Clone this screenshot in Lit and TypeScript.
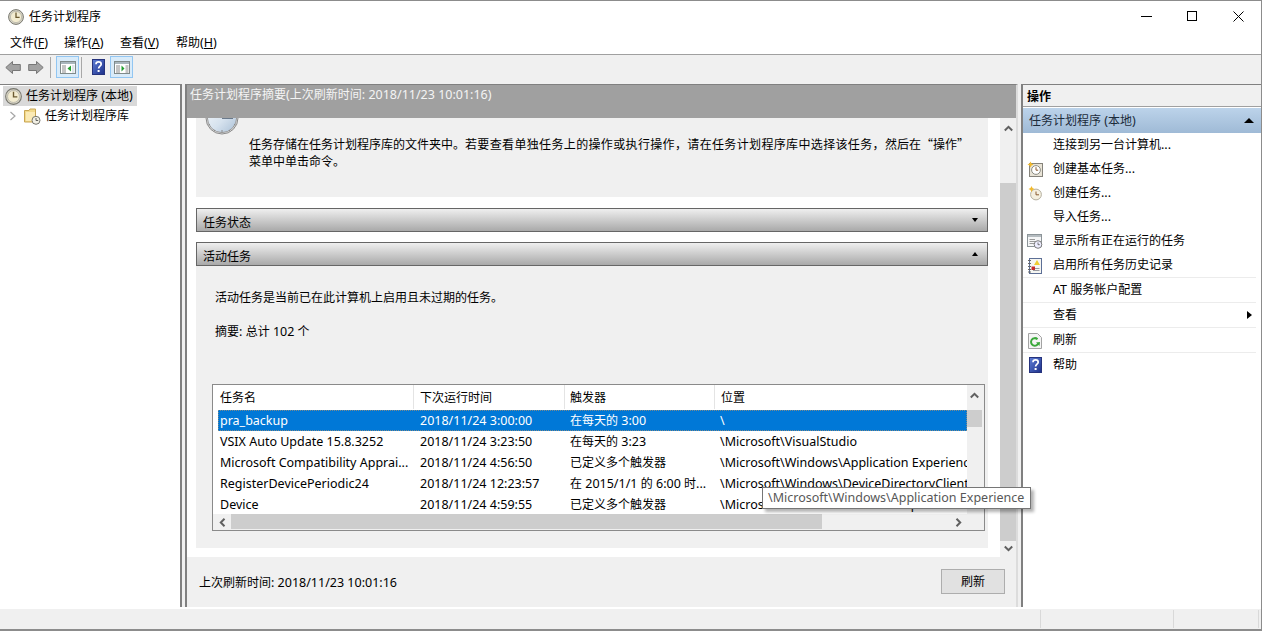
import { LitElement, html, css, svg } from "lit";
import { customElement } from "lit/decorators.js";

/* Latin runs are set slightly larger than CJK runs, as in the reference's UI font. */
const t = (s: string) =>
  s.split(/([\x00-\x7f]+)/).filter(Boolean).map((p) =>
    /^[\x00-\x7f]/.test(p) ? html`<span class="l">${p}</span>` : p);

const clock = (s: number) => html`<svg width=${s} height=${s} viewBox="0 0 16 16"><circle cx="8" cy="8" r="7.4" fill="#d8d4c4" stroke="#77776f"/><circle cx="8" cy="8" r="5.6" fill="#f3ecd0" stroke="#a8a8a0" stroke-width=".6"/><path d="M8 3.6V8.3H11.6" fill="none" stroke="#6b5a30" stroke-width="1.3"/></svg>`;

const bigClock = html`<svg width="34" height="34" viewBox="0 0 34 34"><defs><linearGradient id="cf" x1="0" y1="0" x2="1" y2="1"><stop offset="0" stop-color="#f4f8fb"/><stop offset=".55" stop-color="#d6e2ee"/><stop offset="1" stop-color="#a9bfd6"/></linearGradient></defs><circle cx="17" cy="17" r="16" fill="#e6e6e6" stroke="#8a8a8a"/><circle cx="17" cy="17" r="14.6" fill="url(#cf)" stroke="#9a9a9a"/><path d="M17 17V6M17 17H28" stroke="#4a5a6c" stroke-width="1.4"/><path d="M17 29V31M5 23L3.5 24M29 23L30.5 24M10 29L9 30.5M24 29L25 30.5" stroke="#888"/></svg>`;

const helpIcon = (w: number, h: number) => html`<svg width=${w} height=${h} viewBox="0 0 13 16"><defs><linearGradient id="hb" x1="0" y1="0" x2="1" y2="1"><stop offset="0" stop-color="#5f7fd8"/><stop offset="1" stop-color="#1c2f88"/></linearGradient></defs><rect x=".5" y=".5" width="12" height="15" fill="url(#hb)" stroke="#26337d"/><path d="M4 5.2C4 2.2 9.2 2.2 9.2 5.2C9.2 7.2 6.6 7.2 6.6 9.6" fill="none" stroke="#fff" stroke-width="1.7"/><rect x="5.6" y="11" width="2" height="2" fill="#fff"/></svg>`;

const arrowBack = html`<svg width="16" height="15" viewBox="0 0 16 15"><path d="M.8 7.5L7.5 1.5V4.5H15.3V10.5H7.5V13.5Z" fill="#a2a2a2" stroke="#777"/></svg>`;
const arrowFwd = html`<svg width="16" height="15" viewBox="0 0 16 15"><path d="M15.2 7.5L8.5 1.5V4.5H.7V10.5H8.5V13.5Z" fill="#a2a2a2" stroke="#777"/></svg>`;

const paneIcon = (right: boolean) => html`<svg width="16" height="13" viewBox="0 0 16 13"><rect x=".5" y=".5" width="15" height="12" fill="#fff" stroke="#7f8a8a"/><rect x="1" y="1" width="14" height="2" fill="#a9b6bd"/><path d="M2 5H6M2 7H6M2 9H6M2 11H6" stroke="#8a8a8a"/>${right
  ? svg`<path d="M7.5 4.5L10.5 7.5L7.5 10.5Z" fill="#23a030"/><path d="M11.5 5H14.5M11.5 7H14.5M11.5 9H14.5M11.5 11H14.5" stroke="#8a8a8a"/>`
  : svg`<path d="M11 4.5L7.5 7.5L11 10.5Z" fill="#23a030"/><rect x="12" y="4" width="2.5" height="8" fill="#dfe5e8"/>`}</svg>`;

const folderIcon = html`<svg width="17" height="17" viewBox="0 0 17 17"><path d="M.5 2.5H5L6 1H11.5V14H.5Z" fill="#f2d98a" stroke="#c9a552"/><rect x="2" y="4" width="9" height="9" fill="#fbeab5"/><circle cx="12" cy="12.3" r="4" fill="#f1efe4" stroke="#77776f"/><path d="M12 10V12.5H14.2" fill="none" stroke="#555" stroke-width=".9"/></svg>`;

const basicTask = html`<svg width="16" height="16" viewBox="0 0 16 16"><rect x="2.5" y="2.5" width="13" height="13" fill="#e8e3d6" stroke="#85827a"/><circle cx="9" cy="9" r="4.4" fill="#fff" stroke="#8c8c84"/><path d="M9 6.2V9.2H11.2" fill="none" stroke="#8a5a30"/><path d="M3.5 .5L4.5 2.5L6.5 3.5L4.5 4.5L3.5 6.5L2.5 4.5L.5 3.5L2.5 2.5Z" fill="#f1b92c"/></svg>`;
const newTask = html`<svg width="16" height="16" viewBox="0 0 16 16"><circle cx="9" cy="9.5" r="5.4" fill="#f4efdf" stroke="#b5b0a0"/><path d="M9 6.5V9.8H12" fill="none" stroke="#8a5a30"/><path d="M4.5 1L5.5 3L7.5 4L5.5 5L4.5 7L3.5 5L1.5 4L3.5 3Z" fill="#f1b92c"/></svg>`;
const runningIcon = html`<svg width="16" height="15" viewBox="0 0 16 15"><rect x=".5" y=".5" width="14" height="12" fill="#f5f6f7" stroke="#8c9498"/><rect x="1" y="1" width="13" height="2" fill="#b5bcc0"/><path d="M2.5 5.5H8M2.5 7.5H8M2.5 9.5H7" stroke="#9a9a9a"/><circle cx="11" cy="10.5" r="3.8" fill="#eef" stroke="#7b7b7b"/><path d="M11 8.5V10.7H12.8" fill="none" stroke="#555" stroke-width=".8"/></svg>`;
const historyIcon = html`<svg width="14" height="16" viewBox="0 0 14 16"><rect x="1.5" y=".5" width="12" height="15" fill="#f6f6f2" stroke="#5d6f96"/><path d="M0 2.5H3M0 5.5H3M0 8.5H3M0 11.5H3M0 14H3" stroke="#666"/><path d="M5 10.5H11.5M5 12.5H11.5" stroke="#9a9aa0"/><path d="M9 2L12 7H6Z" fill="#f0cc30"/><rect x="3.5" y="8.5" width="3.5" height="3.5" fill="#c52a2a"/></svg>`;
const refreshIcon = html`<svg width="14" height="16" viewBox="0 0 14 16"><path d="M.5 .5H9.5L13.5 4.5V15.5H.5Z" fill="#f4f4f4" stroke="#a3a3a3"/><path d="M10.5 10A3.8 3.8 0 1 1 9.5 6.2" fill="none" stroke="#3aa83a" stroke-width="2"/><path d="M8 9.5L12 9L11.5 13Z" fill="#3aa83a"/></svg>`;

const rows = [
  ["pra_backup", "2018/11/24 3:00:00", "在每天的 3:00", "\\"],
  ["VSIX Auto Update 15.8.3252", "2018/11/24 3:23:50", "在每天的 3:23", "\\Microsoft\\VisualStudio"],
  ["Microsoft Compatibility Apprai...", "2018/11/24 4:56:50", "已定义多个触发器", "\\Microsoft\\Windows\\Application Experience"],
  ["RegisterDevicePeriodic24", "2018/11/24 12:23:57", "在 2015/1/1 的 6:00 时...", "\\Microsoft\\Windows\\DeviceDirectoryClient"],
  ["Device", "2018/11/24 4:59:55", "已定义多个触发器", "\\Microsoft\\Windows\\Device Setup"],
];

const actions: [string, unknown, boolean][] = [
  ["连接到另一台计算机...", null, false],
  ["创建基本任务...", basicTask, false],
  ["创建任务...", newTask, false],
  ["导入任务...", null, false],
  ["显示所有正在运行的任务", runningIcon, false],
  ["启用所有任务历史记录", historyIcon, true],
  ["AT 服务帐户配置", null, true],
  ["查看", "sub", true],
  ["刷新", refreshIcon, true],
  ["帮助", "help", false],
];

const menus = [["文件", "F"], ["操作", "A"], ["查看", "V"], ["帮助", "H"]];

@customElement("app-root")
export class AppRoot extends LitElement {
  static styles = css`
    :host { display: block; width: 1262px; height: 631px; overflow: hidden; }
    * { box-sizing: border-box; }
    .l { font-size: 12.5px; }
    .cjk { font-family: "Noto Sans CJK SC", sans-serif; }
    .spread { letter-spacing: .35px; }
    .win { position: relative; width: 1262px; height: 631px; display: flex; flex-direction: column; background: #f0f0f0; color: #000;
      font: 12px/16px "Noto Sans", "Noto Sans CJK SC", sans-serif; border-top: 1px solid #8c8c8c; border-right: 1px solid #8c8c8c; border-bottom: 2px solid #8c8c8c; }
    .title { height: 31px; flex: none; background: #fff; display: flex; align-items: center; padding-left: 8px; gap: 5px; }
    .title .cap { flex: 1; }
    .winbtns { display: flex; }
    .winbtn { width: 46px; height: 30px; display: flex; align-items: center; justify-content: center; }
    .menu { height: 22px; flex: none; background: #fff; display: grid; grid-template-columns: 54px 56px 56px 60px; padding-left: 10px; align-items: center; }
    .toolbar { height: 25px; flex: none; background: #f0f0f0; border-top: 1px solid #a0a0a0; display: flex; align-items: center; padding-left: 4px; }
    .tsep { width: 1px; height: 21px; background: #a8a8a8; margin-left: 5px; }
    .tsep.near { margin-left: 2px; }
    .tbtn { width: 23px; height: 22px; margin-left: 5px; display: flex; align-items: center; justify-content: center; }
    .tbtn.arrow { width: 18px; }
    .tbtn.arrow.first { margin-left: 0; }
    .tbtn.help { width: 22px; }
    .tbtn.on { background: #d9ebf9; border: 1px solid #92c6f2; }
    .tbtn.tight { margin-left: 1px; }
    .gapbar { height: 5px; flex: none; background: #f0f0f0; }
    .panes { flex: 1; display: flex; min-height: 0; background: #f0f0f0; }
    .left { width: 182px; flex: none; background: #fff; border: solid #808080; border-width: 1px 2px 0 0; padding: 1px 0 0 3px; }
    .node { display: flex; align-items: center; height: 20px; }
    .node.sel { width: 134px; background: #d9d9d9; gap: 4px; padding-left: 2px; }
    .node.child { gap: 4px; padding-left: 6px; }
    .folder { display: flex; margin-left: 3px; }
    .center { width: 833px; margin-left: 3px; flex: none; display: flex; flex-direction: column; background: #f0f0f0; border-left: 2px solid #808080; border-top: 1px solid #808080; border-right: 2px solid #dcdcdc; }
    .chead { height: 33px; flex: none; background: #a0a0a0; color: #f4f4f4; padding: 2px 0 0 3px; }
    .scroll { height: 439px; flex: none; background: #fff; display: flex; overflow: hidden; }
    .content { flex: 1; padding-left: 9px; min-width: 0; }
    .summary { width: 792px; height: 79px; background: #f0f0f0; position: relative; padding: 17px 0 0 53px; line-height: 17px; }
    .summary svg { position: absolute; left: 9px; top: -17px; }
    .bar { width: 792px; height: 24px; margin-top: 11px; background: linear-gradient(#efefef, #a9a9a9); border: 1px solid #666; display: flex; align-items: center; justify-content: space-between; padding: 6px 9px 0 6px; }
    .bar .tri { margin-top: -6px; }
    .bar.second { margin-top: 10px; }
    .tri { width: 0; height: 0; border-left: 3px solid transparent; border-right: 3px solid transparent; }
    .tri.down { border-top: 4px solid #000; }
    .tri.up { border-bottom: 4px solid #000; }
    .tri.big { border-left-width: 5px; border-right-width: 5px; border-bottom-width: 5px; }
    .active { width: 792px; height: 282px; background: #f0f0f0; padding: 24px 0 0 16px; }
    .active p { margin: 0 0 18px; padding-left: 3px; }
    .table { position: relative; width: 773px; height: 147px; margin-top: 44px; background: #fff; border: 1px solid #8a8a8a; overflow: hidden; }
    .thead { display: grid; grid-template-columns: 201px 151px 150px 1fr; height: 25px; }
    .tr { display: grid; grid-template-columns: 200px 150px 150px 1fr; height: 21px; line-height: 21px; white-space: nowrap; overflow: hidden; }
    .th { height: 24px; line-height: 25px; padding-left: 5px; border-right: 1px solid #e4e4e4; }
    .th:nth-child(1) { padding-left: 7px; }
    .th:nth-child(2) { padding-left: 6px; }
    .th:nth-child(4) { border: 0; padding-left: 6px; }
    .tbody { position: absolute; left: 5px; top: 25px; width: 749px; height: 103px; overflow: hidden; }
    .tr.sel { background: #0078d7; color: #fff; outline: 1px dotted rgba(232, 154, 74, .55); outline-offset: -1px; }
    .td { padding-left: 2px; overflow: hidden; }
    .vs { position: absolute; right: 0; top: 0; width: 17px; height: 129px; background: #f0f0f0; }
    .vs i { position: absolute; left: 0; top: 25px; width: 15px; height: 17px; background: #cdcdcd; }
    .vs svg { position: absolute; left: 3px; top: 7px; }
    .hs { position: absolute; left: 0; bottom: 0; width: 771px; height: 16px; background: #f0f0f0; }
    .hs i { position: absolute; left: 18px; top: 0; width: 591px; height: 15px; background: #cdcdcd; }
    .hs svg { position: absolute; top: 4px; }
    .cvs { width: 16px; margin-left: 11px; flex: none; background: #f0f0f0; position: relative; }
    .cvs i { position: absolute; left: 0; top: 65px; width: 16px; height: 358px; background: #cdcdcd; }
    .cvs span { position: absolute; left: 0; width: 16px; height: 7px; }
    .cvs svg { position: absolute; left: 4px; }
    .foot { flex: 1; display: flex; align-items: center; justify-content: space-between; padding: 1px 11px 0 12px; background: #f0f0f0; }
    .btn { width: 64px; height: 25px; background: #e1e1e1; border: 1px solid #adadad; display: flex; align-items: center; justify-content: center; margin-top: -2px; }
    .right { width: 240px; margin-left: 3px; flex: none; background: #fff; border: solid #808080; border-width: 1px 0 0 2px; }
    .rhead { height: 22px; background: #f0f0f0; font-weight: 700; line-height: 16px; padding: 4px 0 0 4px; border-bottom: 1px solid #a0a0a0; }
    .rsec { height: 25px; margin-top: 1px; background: linear-gradient(#bcd3ea, #9fbad6); display: flex; align-items: center; justify-content: space-between; padding: 0 7px 0 6px; color: #1c2b3a; }
    .act { height: 24px; display: flex; align-items: center; position: relative; padding-left: 30px; }
    .act.sep { height: 25px; padding-bottom: 1px; }
    .act.sep::after { content: ""; position: absolute; left: 0; right: 5px; bottom: 0; height: 1px; background: #ececec; }
    .act .ic { position: absolute; left: 2px; top: 0; bottom: 0; width: 20px; display: flex; align-items: center; justify-content: center; }
    .sub { position: absolute; right: 9px; top: 8px; width: 0; height: 0; border-top: 4px solid transparent; border-bottom: 4px solid transparent; border-left: 5px solid #000; }
    .status { height: 22px; flex: none; background: #f0f0f0; display: grid; grid-template-columns: 1041px 133px 85px; border-top: 2px solid #fff; }
    .status div { border-right: 1px solid #d9d9d9; margin: 1px 0; }
    .tip { position: absolute; left: 762px; top: 486px; width: 269px; height: 22px; background: #fff; border: 1px solid #767676; color: #575757; line-height: 20px; padding-left: 5px; white-space: nowrap; box-shadow: 3px 3px 3px rgba(0,0,0,.3); }
  `;

  private chev(up: boolean) {
    return html`<svg width="9" height="7" viewBox="0 0 9 7"><path d=${up ? "M.8 5.5L4.5 1.8L8.2 5.5" : "M.8 1.5L4.5 5.2L8.2 1.5"} fill="none" stroke="#606060" stroke-width="2"/></svg>`;
  }

  private act(a: [string, unknown, boolean]) {
    const [label, ic, sep] = a;
    return html`<div class="act ${sep ? "sep" : ""}">
      ${ic && ic !== "sub" ? html`<span class="ic">${ic === "help" ? helpIcon(13, 16) : ic}</span>` : ""}
      <span>${t(label)}</span>${ic === "sub" ? html`<span class="sub"></span>` : ""}
    </div>`;
  }

  render() {
    return html`<div class="win">
      <div class="title">${clock(16)}<span class="cap">任务计划程序</span>
        <div class="winbtns">
          <div class="winbtn"><svg width="11" height="11"><path d="M0 5.5H11" stroke="#000"/></svg></div>
          <div class="winbtn"><svg width="11" height="11"><rect x=".5" y=".5" width="9" height="9" fill="none" stroke="#000"/></svg></div>
          <div class="winbtn"><svg width="11" height="11"><path d="M.5 .5L10.5 10.5M10.5 .5L.5 10.5" stroke="#000"/></svg></div>
        </div>
      </div>
      <div class="menu">${menus.map(([a, k]) => html`<span>${a}<span class="l">(<u>${k}</u>)</span></span>`)}</div>
      <div class="toolbar">
        <div class="tbtn arrow first">${arrowBack}</div><div class="tbtn arrow">${arrowFwd}</div>
        <div class="tsep"></div>
        <div class="tbtn on">${paneIcon(false)}</div>
        <div class="tsep near"></div>
        <div class="tbtn help">${helpIcon(13, 16)}</div>
        <div class="tbtn on tight">${paneIcon(true)}</div>
      </div>
      <div class="gapbar"></div>
      <div class="panes">
        <div class="left">
          <div class="node sel">${clock(17)}<span>${t("任务计划程序 (本地)")}</span></div>
          <div class="node child"><svg width="8" height="10" viewBox="0 0 8 10"><path d="M1.5 1L6 5L1.5 9" fill="none" stroke="#a6a6a6" stroke-width="1.2"/></svg><span class="folder">${folderIcon}</span><span>任务计划程序库</span></div>
        </div>
        <div class="center">
          <div class="chead">${t("任务计划程序摘要(上次刷新时间: 2018/11/23 10:01:16)")}</div>
          <div class="scroll">
            <div class="content">
              <div class="summary">${bigClock}任务存储在任务计划程序库的文件夹中。<span class="spread">若要查看单独任务上的操作或执行操作，请在任务计划程序库中选择该任务，</span>然后在<span class="cjk">“操作”</span><br />菜单中单击命令。</div>
              <div class="bar"><span>任务状态</span><span class="tri down"></span></div>
              <div class="bar second"><span>活动任务</span><span class="tri up"></span></div>
              <div class="active">
                <p>活动任务是当前已在此计算机上启用且未过期的任务。</p>
                <p>${t("摘要: 总计 102 个")}</p>
                <div class="table">
                  <div class="thead"><div class="th">任务名</div><div class="th">下次运行时间</div><div class="th">触发器</div><div class="th">位置</div></div>
                  <div class="tbody">
                    ${rows.map((r, i) => html`<div class="tr ${i === 0 ? "sel" : ""}">${r.map((c) => html`<div class="td">${t(c)}</div>`)}</div>`)}
                  </div>
                  <div class="vs">${this.chev(true)}<i></i></div>
                  <div class="hs"><svg style="left:6px" width="7" height="9" viewBox="0 0 7 9"><path d="M5.5 .8L1.8 4.5L5.5 8.2" fill="none" stroke="#606060" stroke-width="2"/></svg><i></i><svg style="right:22px" width="7" height="9" viewBox="0 0 7 9"><path d="M1.5 .8L5.2 4.5L1.5 8.2" fill="none" stroke="#606060" stroke-width="2"/></svg></div>
                </div>
              </div>
            </div>
            <div class="cvs"><span style="top:7px">${this.chev(true)}</span><i></i><span style="top:427px">${this.chev(false)}</span></div>
          </div>
          <div class="foot"><span>${t("上次刷新时间: 2018/11/23 10:01:16")}</span><div class="btn">刷新</div></div>
        </div>
        <div class="right">
          <div class="rhead">操作</div>
          <div class="rsec"><span>${t("任务计划程序 (本地)")}</span><span class="tri up big"></span></div>
          ${actions.map((a) => this.act(a))}
        </div>
      </div>
      <div class="status"><div></div><div></div><div></div></div>
      <div class="tip">${t("\\Microsoft\\Windows\\Application Experience")}</div>
    </div>`;
  }
}
